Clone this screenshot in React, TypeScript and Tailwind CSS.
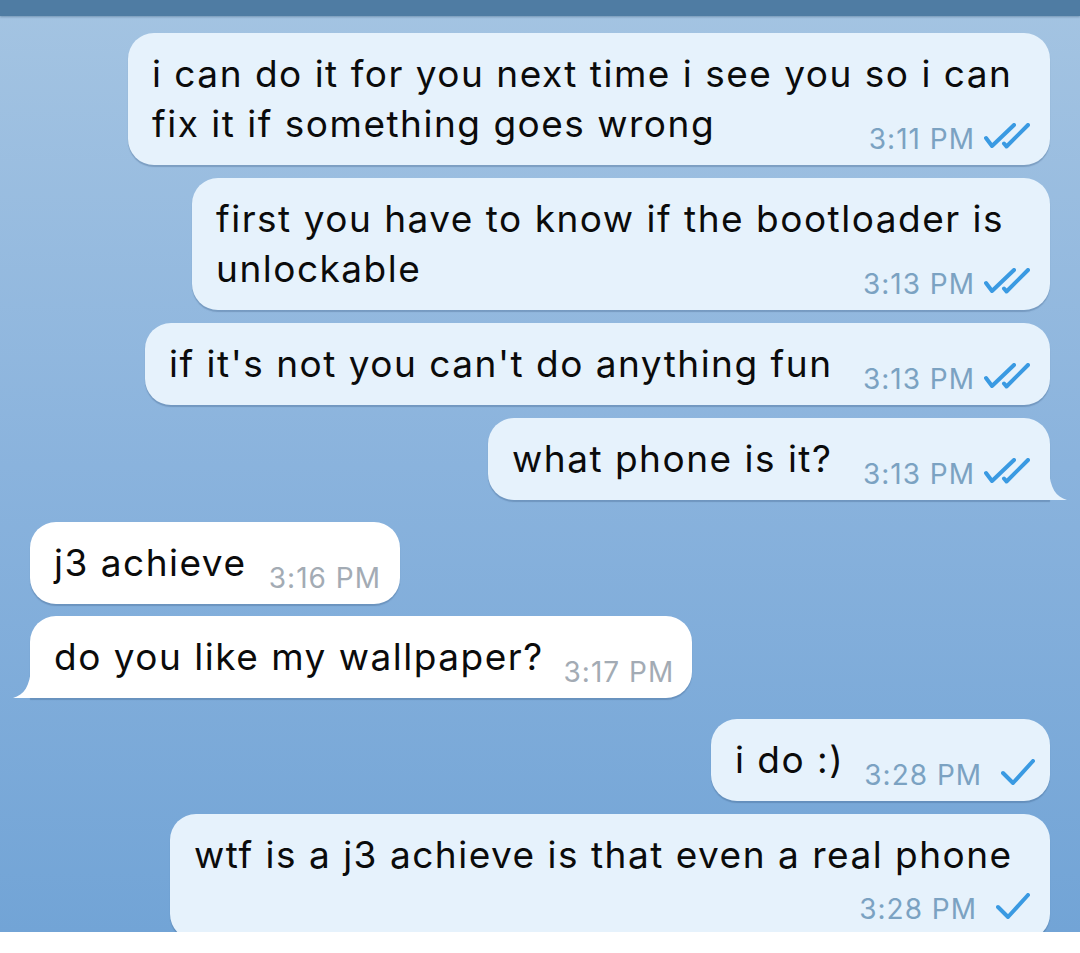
import React from 'react'

type Msg = {
  lines: string[]
  time: string
  out: boolean
  checks?: 0 | 1 | 2
  tail?: boolean
  metaBelow?: boolean
  width: string
  mt: string
}

const messages: Msg[] = [
  {
    lines: ['i can do it for you next time i see you so i can', 'fix it if something goes wrong'],
    time: '3:11 PM',
    out: true,
    checks: 2,
    width: 'w-[922px]',
    mt: 'mt-[17px]',
  },
  {
    lines: ['first you have to know if the bootloader is', 'unlockable'],
    time: '3:13 PM',
    out: true,
    checks: 2,
    width: 'w-[858px]',
    mt: 'mt-[13px]',
  },
  {
    lines: ["if it's not you can't do anything fun"],
    time: '3:13 PM',
    out: true,
    checks: 2,
    width: 'w-[905px]',
    mt: 'mt-[13px]',
  },
  {
    lines: ['what phone is it?'],
    time: '3:13 PM',
    out: true,
    checks: 2,
    tail: true,
    width: 'w-[562px]',
    mt: 'mt-[13px]',
  },
  {
    lines: ['j3 achieve'],
    time: '3:16 PM',
    out: false,
    width: 'w-[370px]',
    mt: 'mt-[22px]',
  },
  {
    lines: ['do you like my wallpaper?'],
    time: '3:17 PM',
    out: false,
    tail: true,
    width: 'w-[662px]',
    mt: 'mt-[12px]',
  },
  {
    lines: ['i do :)'],
    time: '3:28 PM',
    out: true,
    checks: 1,
    width: 'w-[339px]',
    mt: 'mt-[21px]',
  },
  {
    lines: ['wtf is a j3 achieve is that even a real phone'],
    time: '3:28 PM',
    out: true,
    checks: 1,
    metaBelow: true,
    width: 'w-[880px]',
    mt: 'mt-[13px]',
  },
]

function DoubleCheck() {
  return (
    <svg width="46" height="26" viewBox="-2 -2 46 26" fill="none" className="ml-[9px] mb-[5px] shrink-0">
      <path d="M0 13 L6 21 L28 0" stroke="#3a9ae2" strokeWidth="4" strokeLinecap="round" strokeLinejoin="round" />
      <path d="M18 18.5 L20.5 21.5 L42 0" stroke="#3a9ae2" strokeWidth="4" strokeLinecap="round" strokeLinejoin="round" />
    </svg>
  )
}

function SingleCheck() {
  return (
    <svg width="34" height="26" viewBox="-2 -2 34 26" fill="none" className="ml-[19px] mb-[5px] shrink-0">
      <path d="M0 12 L10 22 L30 0" stroke="#3a9ae2" strokeWidth="4" strokeLinecap="round" strokeLinejoin="round" />
    </svg>
  )
}

function Meta({ m }: { m: Msg }) {
  return (
    <div className="flex shrink-0 items-end">
      <span
        className={`whitespace-nowrap text-[28px] leading-[30px] tracking-[1px] ${
          m.out ? 'text-[#7ba2c2]' : 'text-[#a3abb4]'
        }`}
      >
        {m.time}
      </span>
      {m.checks === 2 && <DoubleCheck />}
      {m.checks === 1 && <SingleCheck />}
    </div>
  )
}

const textCls = 'text-[37px] leading-[50px] tracking-[1.5px] text-[#0b0b0b] whitespace-nowrap'

function Bubble({ m }: { m: Msg }) {
  const bg = m.out ? 'bg-[#e6f2fc]' : 'bg-white'
  const fill = m.out ? '#e6f2fc' : '#ffffff'
  const corners = m.tail ? (m.out ? 'rounded-[26px] rounded-br-none' : 'rounded-[26px] rounded-bl-none') : 'rounded-[26px]'
  const last = m.lines[m.lines.length - 1]
  const rest = m.lines.slice(0, -1)

  return (
    <div className={`flex ${m.out ? 'justify-end pr-[30px]' : 'justify-start pl-[30px]'} ${m.mt}`}>
      <div
        className={`relative ${m.width} ${bg} ${corners} shadow-[0_2px_1px_rgba(45,80,120,0.28)] pl-6 ${
          m.out ? 'pr-5' : 'pr-[19px]'
        } pt-4 pb-4`}
      >
        {rest.map((l) => (
          <div key={l} className={textCls}>
            {l}
          </div>
        ))}
        {m.metaBelow ? (
          <>
            <div className={textCls}>{last}</div>
            <div className="mt-[13px] flex justify-end">
              <Meta m={m} />
            </div>
          </>
        ) : (
          <div className="flex items-end justify-between gap-5">
            <span className={textCls}>{last}</span>
            <div className="mb-[-5px]">
              <Meta m={m} />
            </div>
          </div>
        )}
        {m.tail && m.out && (
          <svg width="18" height="30" viewBox="0 0 18 30" className="absolute bottom-0 right-[-17px]">
            <path d="M0 0 C1 18 7 27 18 30 L0 30 Z" fill={fill} />
          </svg>
        )}
        {m.tail && !m.out && (
          <svg width="18" height="30" viewBox="0 0 18 30" className="absolute bottom-0 left-[-17px]">
            <path d="M18 0 C17 18 11 27 0 30 L18 30 Z" fill={fill} />
          </svg>
        )}
      </div>
    </div>
  )
}

export default function App() {
  return (
    <div className="w-[1080px] h-[953px] overflow-hidden bg-white" style={{ fontFamily: 'Inter, "Noto Sans", sans-serif' }}>
      <div className="relative h-[932px] overflow-hidden bg-gradient-to-b from-[#a4c4e2] via-[#8ab3dd] to-[#72a4d6]">
        <div className="h-4 bg-[#4f7ca3] shadow-[0_1px_2px_rgba(30,60,90,0.35)]" />
        {messages.map((m, i) => (
          <Bubble key={i} m={m} />
        ))}
      </div>
    </div>
  )
}
